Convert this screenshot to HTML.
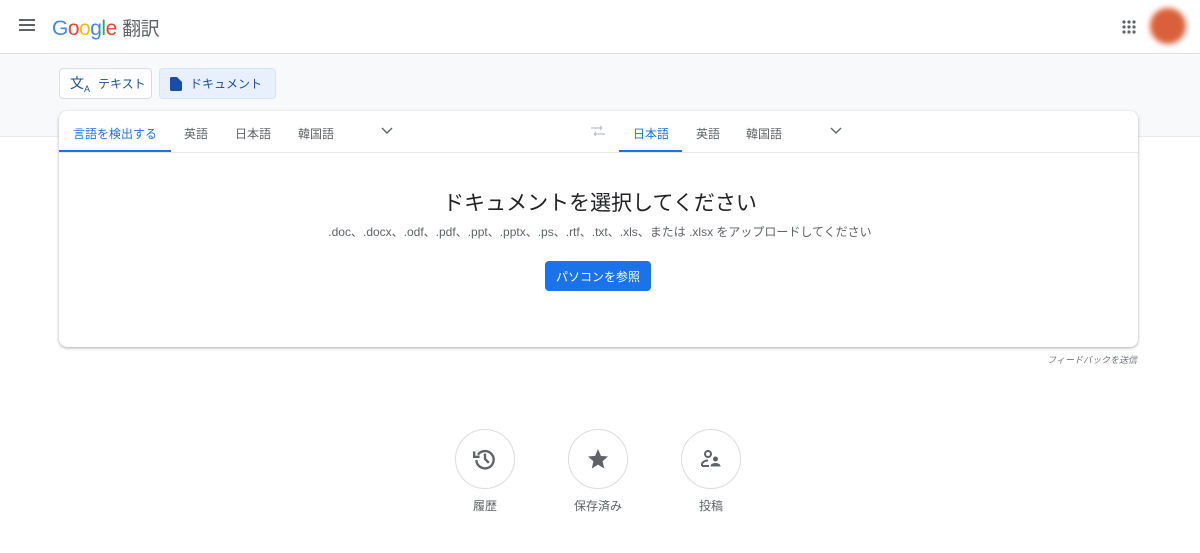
<!DOCTYPE html>
<html><head><meta charset="utf-8"><style>
*{box-sizing:border-box;margin:0;padding:0}
body{width:1200px;height:553px;background:#fff;font-family:"Liberation Sans","Noto Sans CJK JP",sans-serif;position:relative;overflow:hidden;color:#3c4043}
.abs{position:absolute}
.hdr{left:0;top:0;width:1200px;height:54px;border-bottom:1px solid #dadce0;background:#fff}
.band{left:0;top:55px;width:1200px;height:82px;background:#f8f9fa;border-bottom:1px solid #e8eaed}
.btn{height:31px;border:1px solid #dadce0;border-radius:4px;font-size:12px;display:flex;align-items:center;padding-left:10px;gap:8px;background:#fff;color:#1a4ea0}
.card{left:59px;top:111px;width:1079px;height:236px;background:#fff;border-radius:8px;box-shadow:0 1px 3px rgba(60,64,67,.3),0 1px 2px rgba(60,64,67,.15)}
.tab{font-size:12px;color:#5f6368;top:125px}
.t{text-align:center;width:100%}
.circ{width:60px;height:60px;border-radius:50%;border:1px solid #dadce0;top:429px;display:flex;align-items:center;justify-content:center}
.lbl{font-size:12px;color:#5f6368;top:497px;width:100px;text-align:center}
</style></head><body>
<div class="abs hdr"></div>
<svg class="abs" style="left:19px;top:18px" width="18" height="14"><rect y="1" width="16" height="2" fill="#5f6368"/><rect y="6" width="16" height="2" fill="#5f6368"/><rect y="11" width="16" height="2" fill="#5f6368"/></svg>
<div class="abs" style="left:52px;top:14px;font-size:21px;letter-spacing:-0.5px"><span style="color:#4285f4">G</span><span style="color:#ea4335">o</span><span style="color:#fbbc05">o</span><span style="color:#4285f4">g</span><span style="color:#34a853">l</span><span style="color:#ea4335">e</span> <span style="color:#5f6368;font-size:19px">翻訳</span></div>
<svg class="abs" style="left:1122px;top:20px" width="14" height="14" fill="#5f6368"><circle cx="2" cy="2" r="1.6"/><circle cx="7" cy="2" r="1.6"/><circle cx="12" cy="2" r="1.6"/><circle cx="2" cy="7" r="1.6"/><circle cx="7" cy="7" r="1.6"/><circle cx="12" cy="7" r="1.6"/><circle cx="2" cy="12" r="1.6"/><circle cx="7" cy="12" r="1.6"/><circle cx="12" cy="12" r="1.6"/></svg>
<div class="abs" style="left:1150px;top:8px;width:36px;height:36px;border-radius:50%;background:#d9603a;filter:blur(3px)"></div>
<div class="abs band"></div>
<div class="abs btn" style="left:59px;top:68px;width:93px"><span style="font-size:14px;color:#1a4ea0">文<sub style="font-size:9px">A</sub></span>テキスト</div>
<div class="abs btn" style="left:159px;top:68px;width:117px;background:#e8f0fe;border-color:#d2e3fc"><svg width="12" height="14"><path d="M0 1.5Q0 0 1.5 0H7L12 5V12.5Q12 14 10.5 14H1.5Q0 14 0 12.5Z" fill="#174ea6"/></svg>ドキュメント</div>
<div class="abs card"></div>
<div class="abs" style="left:59px;top:152px;width:1079px;height:1px;background:#e8eaed"></div>
<div class="abs tab" style="left:73px;color:#1a73e8">言語を検出する</div>
<div class="abs" style="left:59px;top:150px;width:112px;height:2px;background:#1a73e8"></div>
<div class="abs tab" style="left:184px">英語</div>
<div class="abs tab" style="left:235px">日本語</div>
<div class="abs tab" style="left:298px">韓国語</div>
<svg class="abs" style="left:381px;top:127px" width="12" height="8"><path d="M1 1L6 6L11 1" stroke="#5f6368" stroke-width="1.4" fill="none"/></svg>
<svg class="abs" style="left:590px;top:125px" width="16" height="12"><path d="M4 9H15M4 9l2-2M4 9l2 2M12 3H1M12 3l-2-2M12 3l-2 2" stroke="#bdc1c6" stroke-width="1.2" fill="none"/></svg>
<div class="abs tab" style="left:633px;color:#1a73e8">日本語</div>
<div class="abs" style="left:619px;top:150px;width:63px;height:2px;background:#1a73e8"></div>
<div class="abs tab" style="left:696px">英語</div>
<div class="abs tab" style="left:746px">韓国語</div>
<svg class="abs" style="left:830px;top:127px" width="12" height="8"><path d="M1 1L6 6L11 1" stroke="#5f6368" stroke-width="1.4" fill="none"/></svg>
<div class="abs t" style="top:187px;font-size:21px;color:#202124;left:0">ドキュメントを選択してください</div>
<div class="abs t" style="top:223px;font-size:12px;color:#5f6368;left:0">.doc、.docx、.odf、.pdf、.ppt、.pptx、.ps、.rtf、.txt、.xls、または .xlsx をアップロードしてください</div>
<div class="abs" style="left:545px;top:261px;width:106px;height:30px;background:#1a73e8;border-radius:4px;color:#fff;font-size:12px;display:flex;align-items:center;justify-content:center">パソコンを参照</div>
<div class="abs" style="left:1000px;top:353px;width:137px;text-align:right;font-size:9px;font-style:italic;color:#70757a">フィードバックを送信</div>
<div class="abs circ" style="left:455px"><svg width="26" height="26" viewBox="0 0 24 24"><path d="M5.5 8A8 8 0 1 1 4 13" stroke="#5f6368" stroke-width="2.2" fill="none"/><path d="M2 5v5h5" stroke="#5f6368" stroke-width="2.2" fill="none"/><path d="M12 7v5l3.5 3.5" stroke="#5f6368" stroke-width="2.2" fill="none"/></svg></div>
<div class="abs circ" style="left:568px"><svg width="24" height="24" viewBox="0 0 24 24"><path d="M12 2l2.9 6.9 7.1.6-5.4 4.7 1.6 7.3L12 17.6 5.8 21.5l1.6-7.3L2 9.5l7.1-.6z" fill="#5f6368"/></svg></div>
<div class="abs circ" style="left:681px"><svg width="24" height="24" viewBox="0 0 24 24"><circle cx="9" cy="7" r="3" stroke="#5f6368" stroke-width="2" fill="none"/><path d="M3 19v-1.5C3 15 6 13.5 9 13.5" stroke="#5f6368" stroke-width="2" fill="none"/><path d="M3 19h7" stroke="#5f6368" stroke-width="2"/><circle cx="16.5" cy="12" r="2.5" fill="#5f6368"/><path d="M11.5 19.5c0-2.5 2.5-3.5 5-3.5s5 1 5 3.5z" fill="#5f6368"/></svg></div>
<div class="abs lbl" style="left:435px">履歴</div>
<div class="abs lbl" style="left:548px">保存済み</div>
<div class="abs lbl" style="left:661px">投稿</div>
</body></html>
